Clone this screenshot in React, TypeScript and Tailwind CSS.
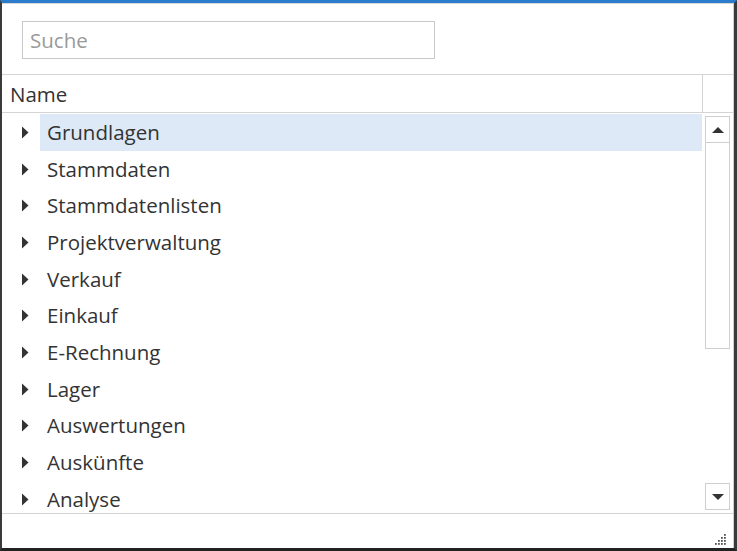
import React from "react";

const items = [
  "Grundlagen",
  "Stammdaten",
  "Stammdatenlisten",
  "Projektverwaltung",
  "Verkauf",
  "Einkauf",
  "E-Rechnung",
  "Lager",
  "Auswertungen",
  "Auskünfte",
  "Analyse",
];

function Caret() {
  return (
    <svg width="8" height="13" viewBox="0 0 8 13" className="shrink-0">
      <path d="M1 0.5 L7.5 6.5 L1 12.5 Z" fill="#333" />
    </svg>
  );
}

function ScrollArrow({ up }: { up?: boolean }) {
  return (
    <div className="w-[25px] h-[27px] border border-[#cfcfcf] bg-white flex items-center justify-center shrink-0">
      <svg width="12" height="8" viewBox="0 0 12 8">
        {up ? (
          <path d="M0 7 L6 1 L12 7 Z" fill="#333" />
        ) : (
          <path d="M0 1 L6 7 L12 1 Z" fill="#333" />
        )}
      </svg>
    </div>
  );
}

export default function App() {
  return (
    <div
      className="w-[737px] h-[551px] bg-white flex flex-col border-t-[3px] border-t-[#2b7ccd] border-l-2 border-l-[#3a3a3a] border-r-[3px] border-r-[#3a3a3a] border-b-[3px] border-b-[#222] overflow-hidden"
      style={{ fontFamily: '"Open Sans", "Noto Sans", sans-serif' }}
    >
      <div className="flex flex-col flex-1 min-h-0 border-r border-r-[#cfcfcf] border-t border-t-[#d8d8d8]">
        {/* search */}
        <div className="h-[71px] pl-[20px] pt-[17px] border-b border-[#d4d4d4] shrink-0">
          <div className="w-[413px] h-[38px] border border-[#c8c8c8] flex items-center pl-[7px] text-[20.5px] text-[#9a9a9a]">
            Suche
          </div>
        </div>

        {/* column header */}
        <div className="h-[38px] flex border-b border-[#d4d4d4] shrink-0">
          <div className="flex-1 flex items-center pl-[8px] pt-[1px] text-[20.5px] text-[#333]">Name</div>
          <div className="w-[31px] border-l border-[#d4d4d4]" />
        </div>

        {/* tree rows + scrollbar */}
        <div className="flex flex-1 min-h-0 overflow-hidden border-b border-[#d4d4d4]">
          <div className="flex-1 pt-[1px]">
            {items.map((name, i) => (
              <div key={name} className="h-[36.7px] flex items-center">
                <div className="w-[38px] flex justify-end pr-[11px]">
                  <Caret />
                </div>
                <div
                  className={`flex-1 h-full flex items-center pl-[7px] text-[20.5px] text-[#333] ${
                    i === 0 ? "bg-[#dde9f6]" : ""
                  }`}
                >
                  {name}
                </div>
              </div>
            ))}
          </div>
          <div className="w-[31px] flex flex-col items-center pt-[3px] pb-[3px]">
            <ScrollArrow up />
            <div className="w-[25px] h-[206px] border border-t-0 border-[#cfcfcf] shrink-0" />
            <div className="flex-1" />
            <ScrollArrow />
          </div>
        </div>

        {/* footer with resize grip */}
        <div className="h-[34px] shrink-0 flex items-end justify-end pr-[7px] pb-[3px]">
          <svg width="12" height="12" viewBox="0 0 12 12">
            {[
              [10, 2],
              [10, 5],
              [7, 5],
              [10, 8],
              [7, 8],
              [4, 8],
              [10, 11],
              [7, 11],
              [4, 11],
              [1, 11],
            ].map(([x, y], k) => (
              <rect key={k} x={x} y={y - 1} width="1.8" height="1.8" fill="#555" />
            ))}
          </svg>
        </div>
      </div>
    </div>
  );
}
